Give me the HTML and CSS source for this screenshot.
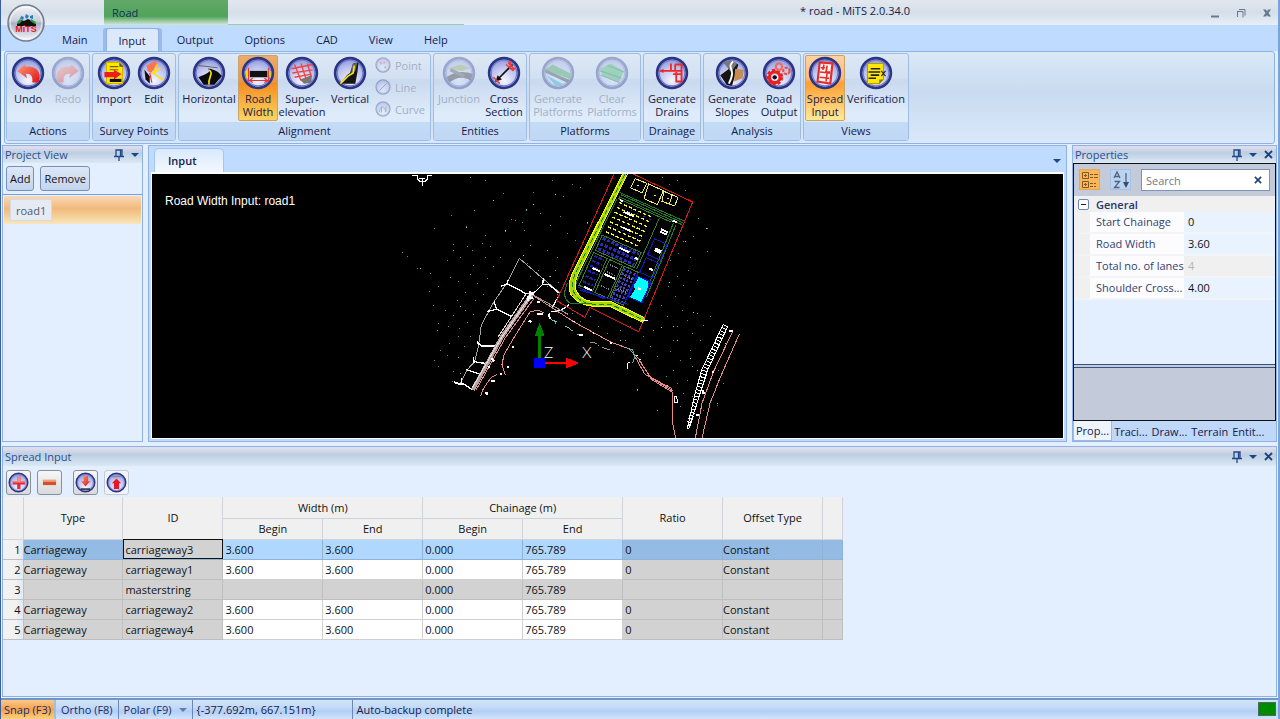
FILE: index.html
```html
<!DOCTYPE html>
<html lang="en">
<head>
    <meta charset="UTF-8">
    <meta name="viewport" content="width=device-width, initial-scale=1.0">
    <title>* road - MiTS 2.0.34.0</title>
    <link rel="stylesheet" href="styles.css">
</head>
<body>
    <!-- shared shapes -->
    <svg class="defs" aria-hidden="true">
        <defs>
            <radialGradient id="glass" cx="50%" cy="75%" r="75%">
                <stop offset="0" stop-color="#f4f5ff"/>
                <stop offset="0.6" stop-color="#bcc2ee"/>
                <stop offset="1" stop-color="#8a92d6"/>
            </radialGradient>
            <linearGradient id="orb" x1="0" y1="0" x2="0" y2="1">
                <stop offset="0" stop-color="#f6f7fa"/>
                <stop offset="0.45" stop-color="#c9cdd8"/>
                <stop offset="0.5" stop-color="#a9b0c2"/>
                <stop offset="1" stop-color="#f4f6fb"/>
            </linearGradient>
            <linearGradient id="red" x1="0" y1="0" x2="1" y2="1">
                <stop offset="0" stop-color="#ff9a7a"/>
                <stop offset="1" stop-color="#e01010"/>
            </linearGradient>
            <symbol id="ring" viewBox="0 0 32 32">
                <circle cx="16" cy="16" r="14" fill="url(#glass)" stroke="#2c3585" stroke-width="2.500"/>
                <circle cx="16" cy="16" r="12" fill="none" stroke="#6f7ccb" stroke-width="1"/>
            </symbol>
            <symbol id="pin" viewBox="0 0 10 12">
                <path d="M2 7V1h6v6M0 7.500h10M5 8v4M6.500 1v6" fill="none" stroke="#1f4788" stroke-width="1.300"/>
            </symbol>
            <symbol id="arrow" viewBox="0 0 8 4">
                <path d="M0 0h8L4 4z" fill="#1f4788"/>
            </symbol>
            <symbol id="cross" viewBox="0 0 9 9">
                <path d="M1 1l7 7M8 1L1 8" stroke="#1f3f7a" stroke-width="1.800"/>
            </symbol>
        </defs>
    </svg>

    <div class="app">
        <header class="titlebar">
            <div class="context-tab">Road</div>
            <div class="context-line"></div>
            <h1 class="title">* road - MiTS 2.0.34.0</h1>
            <div class="window-buttons">
                <button aria-label="Minimize"><svg width="10" height="10"><path d="M1 8.500h8" stroke="#66788f" stroke-width="2"/></svg></button>
                <button aria-label="Restore"><svg width="10" height="10"><path d="M1 3.500h6v6M1.500 3v6M3 1.500h6v6" fill="none" stroke="#66788f"/></svg></button>
                <button aria-label="Close"><svg width="10" height="10"><path d="M1 1.500h3l1 2 1-2h3L6.500 5 9 8.500H6L5 7 4 8.500H1L3.500 5z" fill="#66788f"/></svg></button>
            </div>
            <button class="orb" aria-label="Application menu">
                <svg viewBox="0 0 38 38" width="38" height="38">
                    <circle cx="19" cy="19" r="18" fill="url(#orb)" stroke="#757b8a" stroke-width="1.500"/>
                    <circle cx="19" cy="19" r="16" fill="none" stroke="#fff" stroke-opacity=".7"/>
                    <path d="M10 20l4-4 3 1 4-2 4 2 4 3v2H10z" fill="#111"/>
                    <path d="M10 18l3-3 2 2-3 3zM24 15l5 3-1 2-5-3z" fill="#2d9a4c"/>
                    <path d="M14 12l3 1-1 3-3-1zM19 10l3 2-2 3-2-2zM23 12l3-1v4l-3-1z" fill="#287ec0"/>
                    <text x="19" y="28" text-anchor="middle" class="orb-text">MiTS</text>
                </svg>
            </button>
        </header>

        <nav class="tabs">
            <button class="tab">Main</button>
            <button class="tab active">Input</button>
            <button class="tab">Output</button>
            <button class="tab">Options</button>
            <button class="tab">CAD</button>
            <button class="tab">View</button>
            <button class="tab">Help</button>
        </nav>

        <section class="ribbon">
            <div class="group">
                <div class="tools">
                    <button class="tool w40">
                        <svg class="icon" viewBox="0 0 32 32"><use href="#ring"/><path d="M6 14l7-6 1 2c8-1 12 3 13 8l-1 7h-6c1-6-2-9-6-8l1 4z" fill="url(#red)"/></svg>
                        <span>Undo</span>
                    </button>
                    <button class="tool w40" disabled>
                        <svg class="icon" viewBox="0 0 32 32"><use href="#ring"/><path d="M26 14l-7-6-1 2c-8-1-12 3-13 8l1 7h6c-1-6 2-9 6-8l-1 4z" fill="url(#red)"/></svg>
                        <span>Redo</span>
                    </button>
                </div>
                <h2>Actions</h2>
            </div>

            <div class="group">
                <div class="tools">
                    <button class="tool w40">
                        <svg class="icon" viewBox="0 0 32 32"><use href="#ring"/><path d="M9 6h12l3 3v17H9z" fill="#ffe800" stroke="#d2b400"/><path d="M21 6v4h4z" fill="#555"/><path d="M12 10h8M12 13h8" stroke="#7a5a00"/><path d="M7 15h9v-2l7 4-7 5v-2H7z" fill="#ee1c1c"/><path d="M12 23h11" stroke="#111" stroke-width="3"/></svg>
                        <span>Import</span>
                    </button>
                    <button class="tool w40">
                        <svg class="icon" viewBox="0 0 32 32"><use href="#ring"/><path d="M9 9l9-5 1 5-6 7-3-2z" fill="#ff7352"/><path d="M7 13l5 6v7l-4-4z" fill="#111"/><path d="M19 8l-4 8 10 7M16 16l6-5" fill="none" stroke="#ffe100" stroke-width="1.500"/><path d="M12 16l2 9" stroke="#ee2222"/></svg>
                        <span>Edit</span>
                    </button>
                </div>
                <h2>Survey Points</h2>
            </div>

            <div class="group">
                <div class="tools">
                    <button class="tool w58">
                        <svg class="icon" viewBox="0 0 32 32"><use href="#ring"/><path d="M6 9l18 2" stroke="#666"/><path d="M15 12c4 3-2 5-9 8l5 7h10l7-8c-2-4-7-6-11-7z" fill="#0b0b0b"/><path d="M16 13c5 4-1 6 0 14" fill="none" stroke="#ffe800" stroke-width="1.500"/></svg>
                        <span>Horizontal</span>
                    </button>
                    <button class="tool w40 active">
                        <svg class="icon" viewBox="0 0 32 32"><use href="#ring"/><path d="M8 14h17v6H8z" fill="#111"/><path d="M4 14l4-1v7l-3 1zM25 13l3 1v6l-3-1z" fill="#f5e11c"/><path d="M7 11v13M26 11v13M8 23h17" fill="none" stroke="#e83030"/><path d="M11 21l-3 2 3 2M22 21l3 2-3 2" fill="none" stroke="#e83030"/></svg>
                        <span>Road<br>Width</span>
                    </button>
                    <button class="tool w48">
                        <svg class="icon" viewBox="0 0 32 32"><use href="#ring"/><path d="M14 22l11-4v7l-7 1z" fill="#777"/><path d="M6 12l20-4M7 16l19-3M9 20l16-3M9 8l6 15M15 7l5 15M21 7l4 13" fill="none" stroke="#ef4444" stroke-width="1.300"/></svg>
                        <span>Super-<br>elevation</span>
                    </button>
                    <button class="tool w48">
                        <svg class="icon" viewBox="0 0 32 32"><use href="#ring"/><path d="M7 26l6-8 3-2 3-9 5-1-1 9-2 11z" fill="#161616"/><path d="M18 8l5-2-2 8-4 3z" fill="#666"/><path d="M7 26l7-7 5-3 1-7" fill="none" stroke="#ffe800" stroke-width="1.500"/></svg>
                        <span>Vertical</span>
                    </button>
                    <div class="small-tools">
                        <button class="small-tool" disabled>
                            <svg viewBox="0 0 32 32"><use href="#ring"/><path d="M10 10l4 4M19 19l3 3M20 10l-3 3" stroke="#d55" stroke-width="4"/></svg>
                            <span>Point</span>
                        </button>
                        <button class="small-tool" disabled>
                            <svg viewBox="0 0 32 32"><use href="#ring"/><path d="M9 23L23 9" stroke="#555" stroke-width="2"/></svg>
                            <span>Line</span>
                        </button>
                        <button class="small-tool" disabled>
                            <svg viewBox="0 0 32 32"><use href="#ring"/><path d="M9 22c0-14 12-14 12 0M13 11v12M22 11v10" fill="none" stroke="#555" stroke-width="2"/></svg>
                            <span>Curve</span>
                        </button>
                    </div>
                </div>
                <h2>Alignment</h2>
            </div>

            <div class="group">
                <div class="tools">
                    <button class="tool w48" disabled>
                        <svg class="icon" viewBox="0 0 32 32"><use href="#ring"/><path d="M5 12l12-4 10 3-8 3z" fill="#8aa04a"/><path d="M4 20c8-6 18-6 25-3l-2 6c-7-4-14-3-20 2z" fill="#222"/><path d="M8 13l13 6" stroke="#444" stroke-width="3"/></svg>
                        <span>Junction</span>
                    </button>
                    <button class="tool w42">
                        <svg class="icon" viewBox="0 0 32 32"><use href="#ring"/><path d="M8 24L24 8" stroke="#111" stroke-width="1.500"/><path d="M8 24l6-2-4-4z" fill="#111"/><path d="M18 8l7 6M20 6l6 7M6 20l6 6M22 5v7h5" fill="none" stroke="#ef3c3c" stroke-width="1.500"/></svg>
                        <span>Cross<br>Section</span>
                    </button>
                </div>
                <h2>Entities</h2>
            </div>

            <div class="group">
                <div class="tools">
                    <button class="tool w54" disabled>
                        <svg class="icon" viewBox="0 0 32 32"><use href="#ring"/><path d="M4 13l7-5 18 9-1 5z" fill="#2f9a48"/><path d="M4 14l22 10" stroke="#333" stroke-width="3"/><path d="M5 18l17 9-8 1z" fill="#16b5c8"/></svg>
                        <span>Generate<br>Platforms</span>
                    </button>
                    <button class="tool w54" disabled>
                        <svg class="icon" viewBox="0 0 32 32"><use href="#ring"/><path d="M5 12l10-5 12 7-4 10-16-5z" fill="#31b65b"/><path d="M5 14l20 7M5 18l18 7M12 9l15 6" stroke="#146e30"/></svg>
                        <span>Clear<br>Platforms</span>
                    </button>
                </div>
                <h2>Platforms</h2>
            </div>

            <div class="group">
                <div class="tools">
                    <button class="tool w54">
                        <svg class="icon" viewBox="0 0 32 32"><use href="#ring"/><path d="M5 14h12M15 7v7h10M17 17h8v7h-5v-9M19 8h6v16M19 8v6" fill="none" stroke="#f02828" stroke-width="1.700"/><path d="M4 14l4-2v4z" fill="#f02828"/></svg>
                        <span>Generate<br>Drains</span>
                    </button>
                </div>
                <h2>Drainage</h2>
            </div>

            <div class="group">
                <div class="tools">
                    <button class="tool w54">
                        <svg class="icon" viewBox="0 0 32 32"><use href="#ring"/><path d="M5 18l7-5 6-7 4 2-6 20-5-1z" fill="#151515"/><path d="M8 6l7-2 6 3-6 8z" fill="#777"/><path d="M19 12l8 1-1 8-8 3z" fill="#c58d55"/><path d="M17 5c-7 7 4 6-4 21" fill="none" stroke="#fff" stroke-width="1.800"/></svg>
                        <span>Generate<br>Slopes</span>
                    </button>
                    <button class="tool w40">
                        <svg class="icon" viewBox="0 0 32 32"><use href="#ring"/><circle cx="12" cy="20" r="5" fill="none" stroke="#e92020" stroke-width="3"/><circle cx="12" cy="20" r="7" fill="none" stroke="#e92020" stroke-width="2" stroke-dasharray="3 2"/><circle cx="12" cy="20" r="2" fill="#111"/><circle cx="16" cy="10" r="3" fill="none" stroke="#f06b60" stroke-width="2"/><circle cx="23" cy="14" r="3" fill="none" stroke="#ee4a40" stroke-width="2" stroke-dasharray="3 1"/></svg>
                        <span>Road<br>Output</span>
                    </button>
                </div>
                <h2>Analysis</h2>
            </div>

            <div class="group">
                <div class="tools">
                    <button class="tool w40 active light">
                        <svg class="icon" viewBox="0 0 32 32"><use href="#ring"/><path d="M11 6l12 1-2 19-12-2z" fill="#fff2ee" stroke="#e42b2b" stroke-width="2"/><path d="M12 11h4M18 9l-1 6h4M11 15l10 1M11 20l9 1M15 8l-1 5M18 16l-1 8" fill="none" stroke="#e42b2b" stroke-width="1.500"/></svg>
                        <span>Spread<br>Input</span>
                    </button>
                    <button class="tool w62">
                        <svg class="icon" viewBox="0 0 32 32"><use href="#ring"/><path d="M8 7h15v15l-4 4H8z" fill="#ffe70a" stroke="#b99b00"/><path d="M11 12h9M9 15h11M11 18h8M9 21h7" stroke="#222" stroke-width="1.500"/><path d="M19 26v-4h4" fill="#8f7b00"/><path d="M21 14l4 5M25 14l-4 5" stroke="#222"/></svg>
                        <span>Verification</span>
                    </button>
                </div>
                <h2>Views</h2>
            </div>
        </section>

        <main class="workspace">
            <aside class="panel project">
                <div class="panel-head">
                    <h3>Project View</h3>
                    <button aria-label="Pin"><svg width="10" height="12"><use href="#pin"/></svg></button>
                    <button aria-label="Menu"><svg width="8" height="4"><use href="#arrow"/></svg></button>
                </div>
                <div class="project-actions">
                    <button>Add</button>
                    <button>Remove</button>
                </div>
                <ul class="project-list">
                    <li><span>road1</span></li>
                </ul>
            </aside>

            <section class="document">
                <div class="doc-tabs">
                    <button class="doc-tab">Input</button>
                    <button class="doc-menu" aria-label="Open documents"><svg width="8" height="4"><use href="#arrow"/></svg></button>
                </div>
                <div class="canvas">
                    <p class="canvas-label">Road Width Input: road1</p>
                    <svg class="drawing" viewBox="-714 12 2733 792" preserveAspectRatio="xMidYMid slice" fill="none" stroke-width="3" shape-rendering="crispEdges">
                        <!-- cursor -->
                        <path d="M67 16h16M111 16h16M97 24v23M82 15v12l6 6h18l6-6V15M88 24h18" stroke="#fff"/>

                        <!-- survey points -->
                        <path stroke="#3f9c9c" d="M240 22h3M284 32h3M340 70h3M485 30h3M545 42h3M570 52h3M600 26h3M430 68h3M520 80h3M308 92h3M183 135h3M253 120h3M362 148h3M375 150h3M395 157h3M408 120h3M450 130h3M511 138h3M590 160h3M133 175h3M228 170h3M285 195h3M345 184h3M402 180h3M480 165h3M530 190h3M556 210h3M275 220h3M300 228h3M232 230h3M190 222h3M190 240h3M245 240h3M360 215h3M420 225h3M470 240h3M500 262h3M36 246h3M50 258h3M82 295h3M120 310h3M170 270h3M210 262h3M250 285h3M285 263h3M310 290h3M330 262h3M118 365h3M145 350h3M180 322h3M205 335h3M240 312h3M260 340h3M290 325h3M225 368h3M200 390h3M255 392h3M280 372h3M130 405h3M165 420h3M190 436h3M225 420h3M248 432h3M145 460h3M140 482h3M175 470h3M208 476h3M232 458h3M205 500h3M178 520h3M150 540h3M222 530h3M240 500h3M132 570h3M145 588h3M172 555h3M205 562h3M190 604h3M185 635h3M210 610h3M444 300h3M477 318h3M495 300h3M505 338h3M470 350h3M420 320h3M410 280h3M440 345h3M500 372h3M515 420h3M545 430h3M570 455h3M600 440h3M625 470h3M650 490h3M690 480h3M705 510h3M625 525h3M670 548h3M720 470h3M760 500h3M790 480h3M780 530h3M760 550h3M800 560h3M813 405h3M830 440h3M860 470h3M850 510h3M840 545h3M875 420h3M890 450h3M905 490h3M920 430h3M940 465h3M960 440h3M930 510h3M900 540h3M870 570h3M905 590h3M850 600h3M827 620h3M860 640h3M890 630h3M880 670h3M870 710h3M800 720h3M742 660h3M760 600h3M950 175h3M925 145h3M880 215h3M910 200h3M865 250h3M900 262h3M950 245h3M840 270h3M895 300h3M860 320h3M835 350h3M880 345h3M920 330h3M855 380h3M900 380h3M815 22h3M838 42h3M885 60h3M860 30h3M960 550h3M985 600h3M1000 640h3M982 705h3M1010 570h3M940 720h3M960 690h3M905 680h3"/>
                        <path stroke="#8de0e0" d="M430 104h3M308 90h3M408 118h3M346 182h3M228 172h3M400 255h3M90 294h3M210 408h3M495 72h3M592 158h3M480 320h3M884 214h3M948 174h3M836 336h3M908 428h3M862 510h3M814 472h3M740 658h3M900 566h3M830 645h3M920 602h3M980 700h3M1005 520h3M690 512h3M850 470h3"/>

                        <!-- left embankment -->
                        <path d="M388 265L350 340l-38 55-38 70-8 60-12 50-24 26-18 38M388 265l72 62 50 42" stroke="#a5a5a5"/>
                        <path d="M350 340l60 32M334 348l16-5 4-12M460 325l-2 18-22 22-18 6M458 343h18l30 25M312 395l8 22 46 24M292 424l28-6M266 520l8 8h45M262 512l4 14M248 568l10 8 32 5M250 560l2 18M228 598l40 14M210 640h8l30 20M214 625l2 20M488 410l16-28M488 425l22-3 28-18M478 430v18" stroke="#fff" stroke-width="4"/>
                        <path d="M426 372L336 500 248 660" stroke="#b9a0a0" stroke-width="12"/>
                        <path d="M420 380L330 510 246 655M408 372L325 500M410 372l14-6" stroke="#ddd"/>
                        <path d="M432 385L345 505 258 660M462 428l-20-8-22 6-50 80-28 48-6 30 10 30M272 678l8-22 22-32 20-12" stroke="#e88a8a"/>
                        <path d="M420 362v20h-6v12M424 372h8M418 384h12M440 396h10M416 452l8 4M440 432h18M366 532h5M305 565l8 8M295 590h6M350 590h6M304 634h10M330 612h6M284 670h8v6M192 636l20 8M476 432l4 14" stroke="#fff" stroke-width="6"/>
                        <path d="M482 448l18 8M526 468l14 8" stroke="#70cfcf"/>

                        <!-- lower road -->
                        <path d="M432 378l120 78 110 60 54 20 30 30 38 62 62 38v85l12 60" stroke="#e88a8a"/>
                        <path d="M748 572l34 50 64 34M736 562l28 50 84 50" stroke="#e88a8a"/>
                        <path d="M430 375l104 58M540 478l8 4M560 492l18 6M600 516l20 4M636 532l24 8M490 450l8 10" stroke="#999"/>
                        <path d="M484 424h8M550 454h6M608 488h5M660 518h6M738 556h5M746 568h6M568 494h10M712 582v16" stroke="#fff" stroke-width="5"/>
                        <path d="M712 580l8-4M852 678h8l2 18h-8z" stroke="#fff"/>
                        <path d="M712 534l16 6 6 20-6 20" stroke="#5ab3aa"/>

                        <!-- right road -->
                        <path d="M1008 466L944 598 922 672 894 776" stroke="#fff" stroke-width="15" stroke-dasharray="3 7"/>
                        <path d="M1000 462L935 600 914 675 892 776M1014 468L954 598 930 672 896 776" stroke="#fff"/>
                        <path d="M1028 484L970 606 936 700 916 804M1048 492L990 624 960 700 936 804" stroke="#e88a8a"/>
                        <path d="M1018 482h10M966 606h6M938 660v8h8M918 734h10" stroke="#fff" stroke-width="6"/>

                        <!-- site boundary -->
                        <path d="M672 12L500 392l84 50 16-30 146 73 162-389L730 12" stroke="#e01818"/>
                        <path d="M690 68l192 85M686 80l190 84M692 74l190 86M858 164L770 380M850 160l-84 208M680 88L562 330l-10 30" stroke="#1e7c2c"/>

                        <!-- site blocks -->
                        <g transform="translate(690 90) rotate(24)">
                            <path d="M-6-2h172M-6 118h128v50H-6zM-8 176h44v108H-8zM44 176h42v108H44zM92 176h46v108H92zM130 0v170" stroke="#39802b"/>
                            <path d="M0 8h112M0 24h112M0 40h112M0 56h112M0 72h112M0 88h112M0 104h112" stroke="#f6f626" stroke-width="4" stroke-dasharray="10 6"/>
                            <path d="M4 16h104M4 48h104M4 80h104" stroke="#2727b0" stroke-dasharray="4 16"/>
                            <path d="M0 126h118M0 144h118M0 160h118" stroke="#2b2bb8" stroke-width="9" stroke-dasharray="9 5"/>
                            <path d="M-2 184h32M-2 200h32M-2 216h32M-2 232h32M-2 250h32M-2 268h32" stroke="#2020a8" stroke-width="6" stroke-dasharray="10 4"/>
                            <path d="M98 182v98M108 182v98M118 182v98M130 182v98" stroke="#4545c0" stroke-width="6" stroke-dasharray="8 5"/>
                            <path d="M52 190h26M52 212h26M52 258h26M102 202h30M102 246h30" stroke="#888" stroke-dasharray="3 3" stroke-width="5"/>
                            <path d="M142 64h42v52h-42zM142 126h42v48h-42zM-10 290h90M0 296l150-20M138 180v90" stroke="#1818c4"/>
                            <path d="M140 188h44v66h-44z" stroke="#1414d0" stroke-width="6"/>
                            <path d="M146 190h30l6 20-2 42h-32l4-26-8-8z" fill="#0ff" stroke="#0ff"/>
                            <path d="M24 28h34M40 72h26M56 132h34M8 220h24M48 222h34M148 30h22M148 38h22M156 90h20M156 96h20M164 152h12M8 282h26M156 220h12M110 140h12M0 0h10M170-8h14" stroke="#fff" stroke-width="6"/>
                        </g>
                        <path d="M736 26l34 14-14 28-34-14zM776 42l44 20-18 42-40-18zM822 64l42 18-10 26-38-14zM740 46h6M792 76h6M832 86h6M846 76l-8 28" stroke="#f2e96b"/>
                        <path d="M705 12L560 300q-24 50-6 72 18 28 50 30h56l102 50" stroke="#a8d800" stroke-width="15"/>
                        <path d="M698 12L552 300q-26 52-6 78 24 28 60 30h50l104 50M712 12L570 300q-24 46-8 68 16 24 44 26h56l100 48" stroke="#ff0"/>
                        <path d="M705 12L561 300q-24 50-6 72 18 28 50 30h56l102 50" stroke="#1e7c2c" stroke-dasharray="16 8"/>
                        <path d="M532 340q-20 46 10 60h60" stroke="#1e7c2c"/>
                        <path d="M754 452h20" stroke="#fff"/>

                        <!-- axes -->
                        <path d="M449 570v-80" stroke="#008200" stroke-width="9"/>
                        <path d="M449 458l15 40h-30z" fill="#008200"/>
                        <path d="M460 579h70" stroke="#f00" stroke-width="6"/>
                        <path d="M568 579l-40-16v32z" fill="#f00"/>
                        <path d="M432 564h33v30h-33z" fill="#00f"/>
                        <text x="462" y="563" class="axis">Z</text>
                        <text x="576" y="563" class="axis">X</text>
                    </svg>
                </div>
            </section>

            <aside class="panel properties">
                <div class="panel-head">
                    <h3>Properties</h3>
                    <button aria-label="Pin"><svg width="10" height="12"><use href="#pin"/></svg></button>
                    <button aria-label="Menu"><svg width="8" height="4"><use href="#arrow"/></svg></button>
                    <button aria-label="Close"><svg width="9" height="9"><use href="#cross"/></svg></button>
                </div>
                <div class="property-frame">
                    <div class="property-bar">
                        <button class="sort active" aria-label="Categorized"><svg width="20" height="20"><path d="M2.500 2.500h6v6h-6zM2.500 11.500h6v6h-6zM4 5.500h3M5.500 4v3M4 14.500h3M5.500 13v3M10 4.500h3M14 4.500h4M10 7.500h3M14 7.500h4M10 13.500h3M14 13.500h2M10 16.500h3M14 16.500h2" fill="none" stroke="#805b23"/></svg></button>
                        <button class="sort" aria-label="Alphabetical"><svg width="20" height="20"><path d="M3 8l3-6 3 6M4 6.500h4M3.500 11.500h5l-5 6h5M15 3v12" fill="none" stroke="#56627c" stroke-width="1.300"/><path d="M12 12h6l-3 6z" fill="#3d4c68"/></svg></button>
                        <div class="search">
                            <input type="text" placeholder="Search" aria-label="Search">
                            <button aria-label="Clear search"><svg width="8" height="8"><use href="#cross"/></svg></button>
                        </div>
                    </div>
                    <div class="property-grid">
                        <div class="category"><button aria-label="Collapse"></button><h4>General</h4></div>
                        <div class="property"><label for="start">Start Chainage</label><input id="start" value="0"></div>
                        <div class="property"><label for="width">Road Width</label><input id="width" value="3.60"></div>
                        <div class="property"><label for="lanes">Total no. of lanes</label><input id="lanes" value="4" disabled></div>
                        <div class="property"><label for="shoulder">Shoulder Cross...</label><input id="shoulder" value="4.00"></div>
                    </div>
                    <div class="property-help"></div>
                </div>
                <div class="side-tabs">
                    <button class="active">Prop...</button>
                    <button>Traci...</button>
                    <button>Draw...</button>
                    <button>Terrain</button>
                    <button>Entit...</button>
                </div>
            </aside>
        </main>

        <section class="panel spread">
            <div class="panel-head">
                <h3>Spread Input</h3>
                <button aria-label="Pin"><svg width="10" height="12"><use href="#pin"/></svg></button>
                <button aria-label="Menu"><svg width="8" height="4"><use href="#arrow"/></svg></button>
                <button aria-label="Close"><svg width="9" height="9"><use href="#cross"/></svg></button>
            </div>
            <div class="spread-tools">
                <button aria-label="Add row"><svg viewBox="0 0 32 32"><use href="#ring"/><path d="M14 7h5v7h7v5h-7v7h-5v-7H7v-5h7z" fill="#e8283a"/><path d="M14 7h5v7h7v2H7v-2h7z" fill="#f58e86"/></svg></button>
                <button class="gap-after" aria-label="Remove row"><svg viewBox="0 0 32 32"><path d="M6 12h20v8H6z" fill="#d2502a"/><path d="M6 12h20v3H6z" fill="#f0a07c"/></svg></button>
                <button aria-label="Import"><svg viewBox="0 0 32 32"><use href="#ring"/><path d="M13 6h7v8h3l-7 8-7-8h4z" fill="url(#red)"/><path d="M9 26h14" stroke="#111" stroke-width="2"/></svg></button>
                <button class="faded" aria-label="Export"><svg viewBox="0 0 32 32"><use href="#ring"/><path d="M12 26h8v-9h3l-7-7-7 7h3z" fill="#e6182a"/><path d="M9 7h14" stroke="#889" stroke-width="2"/></svg></button>
            </div>
            <table>
                <colgroup>
                    <col class="col-num"><col span="8"><col class="col-end">
                </colgroup>
                <thead>
                    <tr>
                        <th rowspan="2"></th>
                        <th rowspan="2">Type</th>
                        <th rowspan="2">ID</th>
                        <th colspan="2">Width (m)</th>
                        <th colspan="2">Chainage (m)</th>
                        <th rowspan="2">Ratio</th>
                        <th rowspan="2">Offset Type</th>
                        <th rowspan="2"></th>
                    </tr>
                    <tr>
                        <th>Begin</th>
                        <th>End</th>
                        <th>Begin</th>
                        <th>End</th>
                    </tr>
                </thead>
                <tbody>
                    <tr class="selected"><th>1</th><td class="flush">Carriageway</td><td class="focus">carriageway3</td><td class="edit">3.600</td><td class="edit">3.600</td><td class="edit">0.000</td><td class="edit">765.789</td><td>0</td><td class="flush">Constant</td><td></td></tr>
                    <tr><th>2</th><td class="flush">Carriageway</td><td>carriageway1</td><td class="edit">3.600</td><td class="edit">3.600</td><td class="edit">0.000</td><td class="edit">765.789</td><td>0</td><td class="flush">Constant</td><td></td></tr>
                    <tr><th>3</th><td></td><td>masterstring</td><td></td><td></td><td>0.000</td><td>765.789</td><td></td><td></td><td></td></tr>
                    <tr><th>4</th><td class="flush">Carriageway</td><td>carriageway2</td><td class="edit">3.600</td><td class="edit">3.600</td><td class="edit">0.000</td><td class="edit">765.789</td><td>0</td><td class="flush">Constant</td><td></td></tr>
                    <tr><th>5</th><td class="flush">Carriageway</td><td>carriageway4</td><td class="edit">3.600</td><td class="edit">3.600</td><td class="edit">0.000</td><td class="edit">765.789</td><td>0</td><td class="flush">Constant</td><td></td></tr>
                </tbody>
            </table>
        </section>

        <footer class="statusbar">
            <button class="active">Snap (F3)</button>
            <button>Ortho (F8)</button>
            <button>Polar (F9) <svg width="8" height="4" opacity=".6"><use href="#arrow"/></svg></button>
            <span class="coords">{-377.692m, 667.151m}</span>
            <span class="message">Auto-backup complete</span>
            <span class="led"></span>
        </footer>
    </div>
</body>
</html>
```
FILE: styles.css
```css
* {
    box-sizing: border-box;
}

body {
    margin: 0;
    background-color: #e3efff;
    color: #15204a;
    font-family: "Open Sans", "Noto Sans", sans-serif;
    font-size: 11px;
    line-height: 13px;
}

h1, h2, h3, h4, p, ul {
    margin: 0;
    padding: 0;
    font-size: 11px;
    font-weight: normal;
    list-style: none;
}

button, input {
    margin: 0;
    padding: 0;
    border: none;
    background: none;
    color: inherit;
    font: inherit;
}

svg {
    display: block;
}

.defs {
    position: absolute;
    width: 0;
    height: 0;
}

.app {
    display: flex;
    flex-direction: column;
    height: 100vh;
    border-left: 1px solid #3b5f9e;
    border-right: 2px solid #7aa3dc;
}

/* title bar */
.titlebar {
    position: relative;
    display: flex;
    height: 25px;
    padding-left: 103px;
    background: linear-gradient(#e3e8ee, #d5dfe9 50%, #e4eff8);
}

.context-tab {
    width: 124px;
    padding: 6px 8px;
    background: linear-gradient(#63a96b, #4fa358 65%, #a8d0ae 88%, #d5e8d8);
    color: #10305a;
}

.context-line {
    width: 236px;
    border-bottom: 1px solid #a9c99a;
}

.title {
    flex: 1;
    padding: 4px 0 0 36px;
    text-align: center;
}

.window-buttons {
    display: flex;
    gap: 16px;
    align-items: center;
    padding-right: 6px;
}

.orb {
    position: absolute;
    left: 6px;
    top: 4px;
    z-index: 2;
}

.orb-text {
    font: bold 9px "Liberation Sans", sans-serif;
    fill: #e01818;
}

/* ribbon tabs */
.tabs {
    display: flex;
    gap: 5px;
    height: 26px;
    padding: 3px 0 0 48px;
    background-color: #bfdbff;
}

.tab {
    padding: 0 13px;
    border-radius: 3px 3px 0 0;
}

.tab.active {
    border: 1px solid #8fb1e0;
    border-bottom: none;
    padding: 0 12px;
    background-color: #dbe9fa;
    box-shadow: -3px 0 #9dbbe8, 3px 0 #9dbbe8;
}

/* ribbon */
.ribbon {
    display: flex;
    gap: 2px;
    height: 93px;
    margin: 0 3px 0 3px;
    padding: 1px;
    border: 1px solid #8db2e3;
    border-radius: 3px;
    background: linear-gradient(#dae8f8, #c9dbf1 45%, #d9e8fa);
}

.group {
    display: flex;
    flex-direction: column;
    height: 88px;
    border: 1px solid #9dbce6;
    border-radius: 3px;
    background: linear-gradient(#dee8f5, #d2e0f2 28%, #c9d9ee 30%, #deebfa 70%);
}

.group h2 {
    height: 18px;
    padding-top: 2px;
    border-radius: 0 0 2px 2px;
    background: linear-gradient(#c3dcf6, #c1d7f4);
    text-align: center;
}

.tools {
    display: flex;
    flex: 1;
    padding: 1px;
}

.tool {
    display: flex;
    flex-direction: column;
    align-items: center;
    gap: 2px;
    border: 1px solid transparent;
    border-radius: 2px;
    white-space: nowrap;
}

.tool:disabled, .small-tool:disabled {
    color: #a3afc6;
}

.tool:disabled svg, .small-tool:disabled svg {
    opacity: 0.35;
}

.tool.active {
    border-color: #c9a268;
    background: linear-gradient(#ecac68, #e8964a 40%, #f38d23 42%, #ffd35e);
}

.tool.active.light {
    background: linear-gradient(#ffd3a0, #ffbb75 35%, #ff9e32 42%, #ffea97);
}

.w40 { width: 40px; }
.w42 { width: 42px; }
.w48 { width: 48px; }
.w54 { width: 54px; }
.w58 { width: 58px; }
.w62 { width: 62px; }

.icon {
    width: 34px;
    height: 34px;
    flex: none;
}

.small-tools {
    display: flex;
    flex-direction: column;
    gap: 6px;
    width: 55px;
    padding: 2px 0 0 1px;
}

.small-tool {
    display: flex;
    align-items: center;
    gap: 4px;
}

.small-tool svg {
    width: 16px;
    height: 16px;
}

/* workspace */
.workspace {
    display: flex;
    gap: 5px;
    flex: 1;
    min-height: 0;
    padding: 1px 1px 0;
}

.panel {
    display: flex;
    flex-direction: column;
    border: 1px solid #8db2e3;
    background-color: #e3efff;
}

.panel-head {
    display: flex;
    align-items: center;
    gap: 7px;
    height: 17px;
    padding: 0 3px 0 2px;
    background: linear-gradient(#dcdcec 10%, #bdcee3 40%, #dbe8f4);
    color: #284f91;
}

.panel-head h3 {
    flex: 1;
}

.project {
    width: 141px;
}

.project-actions {
    display: flex;
    gap: 6px;
    padding: 3px;
    border-bottom: 1px solid #7ba2d8;
}

.project-actions button {
    height: 25px;
    padding: 0 3px;
    border: 1px solid #7590bd;
    border-radius: 3px;
    background: linear-gradient(#dde8f6, #c3d5ed);
    color: #111;
}

.project-list {
    padding: 1px;
}

.project-list li {
    height: 28px;
    padding: 3px 6px;
    border-radius: 2px;
    background: linear-gradient(#f8d9b8, #f3b87c 45%, #f2c78a 60%, #f8e6bc);
}

.project-list span {
    display: inline-block;
    height: 22px;
    padding: 4px 5px;
    border: 1px solid #d5dbe6;
    background-color: #e6ebf3;
    color: #4d5a70;
}

.document {
    display: flex;
    flex-direction: column;
    flex: 1;
    border: 1px solid #8db2e3;
    background-color: #bfdbff;
}

.doc-tabs {
    display: flex;
    justify-content: space-between;
    align-items: flex-end;
    height: 26px;
    padding: 0 5px;
}

.doc-tab {
    width: 70px;
    height: 24px;
    padding: 0 13px;
    border: 1px solid #a5c4ef;
    border-bottom: none;
    border-radius: 5px 5px 0 0;
    background: linear-gradient(#d9e9fd, #f3f8ff);
    font-weight: 600;
    text-align: left;
}

.doc-menu {
    padding: 0 0 9px;
}

.canvas {
    position: relative;
    flex: 1;
    min-height: 0;
    margin: 0 2px 2px;
    border: 1px solid #fff;
    border-top-width: 2px;
    background-color: #000;
    overflow: hidden;
}

.drawing {
    width: 100%;
    height: 100%;
}

.canvas-label {
    position: absolute;
    left: 13px;
    top: 21px;
    color: #fff;
    font-family: "Liberation Sans", Arial, sans-serif;
    font-size: 12px;
}

.axis {
    font: 300 46px Lato, sans-serif;
    fill: #fff;
}

/* properties */
.properties {
    width: 205px;
}

.property-frame {
    display: flex;
    flex-direction: column;
    flex: 1;
    border: 1px solid #111;
}

.property-bar {
    display: flex;
    gap: 10px;
    padding: 5px;
    background-color: #c3cbdb;
}

.sort {
    flex: none;
    width: 21px;
    height: 21px;
    border: 1px solid #a9c1e2;
    background-color: #b9d3f1;
}

.sort.active {
    border-color: #e2aa55;
    background-color: #fcb659;
}

.search {
    display: flex;
    align-items: center;
    flex: 1;
    min-width: 0;
    height: 22px;
    padding: 0 7px 0 4px;
    border: 1px solid #7d92b8;
    background-color: #fff;
}

.search input {
    flex: 1;
    min-width: 0;
}

.search input::placeholder {
    color: #75787f;
}

.property-grid {
    flex: 1;
}

.category {
    display: flex;
    align-items: center;
    gap: 7px;
    height: 16px;
    padding-left: 4px;
    background-color: #f0f0f0;
    color: #26366f;
}

.category h4 {
    font-weight: 600;
}

.category button {
    position: relative;
    width: 11px;
    height: 11px;
    border: 1px solid #6e86b1;
    border-radius: 2px;
    background-color: #fff;
}

.category button::after {
    content: "";
    position: absolute;
    left: 2px;
    top: 4px;
    width: 5px;
    height: 1px;
    background-color: #222;
}

.property {
    display: flex;
    height: 22px;
    margin-right: 1px;
    border-left: 16px solid #f0f0f0;
    border-bottom: 2px solid #f3f4f5;
    background-color: #fcfcfe;
    color: #33416f;
}

.property label {
    width: 94px;
    padding: 3px 0 0 6px;
    white-space: nowrap;
}

.property input {
    flex: 1;
    min-width: 0;
    padding: 0 0 1px 4px;
    background-color: #e8f3ff;
    color: #111;
}

.property input:disabled {
    background-color: #f0f0f0;
    color: #b5b5b5;
}

.property-help {
    height: 56px;
    border-top: 4px double #38507c;
    background-color: #c3cbdb;
}

.side-tabs {
    display: flex;
    height: 20px;
    background-color: #bfd7f8;
    color: #15204a;
}

.side-tabs button {
    padding: 0 2px;
}

.side-tabs .active {
    border: 1px solid #a4b8d6;
    border-top: none;
    background-color: #edf4fd;
}

/* spread input */
.spread {
    height: 251px;
    margin: 4px 1px 1px;
}

.spread .panel-head {
    height: 19px;
}

.spread-tools {
    display: flex;
    gap: 6px;
    padding: 4px 3px 2px;
}

.spread-tools button {
    width: 25px;
    height: 25px;
    padding: 1px;
    border: 1px solid #8a8f99;
    border-radius: 3px;
    background: linear-gradient(#f7f7f7, #d9dadd);
}

.spread-tools .gap-after {
    margin-right: 5px;
}

.spread-tools .faded {
    border-color: #c2c9d4;
    background: #f1f4f8;
}

table {
    width: 840px;
    border-collapse: collapse;
    table-layout: fixed;
    color: #111;
}

.col-num, .col-end {
    width: 20px;
}

th {
    height: 21px;
    padding: 0;
    border: 1px solid #d0d3d8;
    border-top: none;
    background-color: #f0f0f0;
    font-weight: normal;
}

td, tbody th {
    height: 20px;
    padding: 0 2px;
    border: 1px solid #bfbfbf;
    background-color: #d2d2d2;
}

tbody th {
    border-left: none;
    background: linear-gradient(90deg, #f2f2f2 60%, #dfe9f6);
    text-align: right;
}

thead th:first-child, thead tr:first-child th:last-child {
    border-left: none;
}

.flush {
    padding: 0;
}

.edit {
    border-color: #d0d0d0;
    background-color: #fff;
}

.selected td {
    border-color: #8fb2d8;
    background-color: #94bbe3;
}

.selected .edit {
    background-color: #b0d8ff;
}

.selected .focus {
    background-color: #d2d2d2;
    outline: 1px solid #111;
    outline-offset: -1px;
}

/* status bar */
.statusbar {
    display: flex;
    height: 21px;
    border-top: 2px solid #6f95c9;
    background: linear-gradient(#d5e5f9, #c2d9f7 40%, #b3cff5 60%, #d3e4fb);
    white-space: nowrap;
}

.statusbar button, .statusbar span {
    display: flex;
    align-items: center;
    gap: 7px;
    padding: 0 4px;
    border-right: 1px solid #6c87b5;
    color: #1b2a6b;
}

.statusbar button {
    padding: 0 5px;
}

.statusbar .active {
    padding: 0 3px;
    border-right: 2px solid #a9bcd9;
    background: linear-gradient(#fbc98b, #f6a24c 50%, #fbd17c);
}

.statusbar .coords {
    width: 160px;
    color: #15204a;
}

.statusbar .message {
    flex: 1;
    border: none;
    color: #15204a;
}

.statusbar .led {
    width: 18px;
    margin: 2px 2px 3px;
    border: 1px solid #4a6a5a;
    background-color: #008a00;
}
```
